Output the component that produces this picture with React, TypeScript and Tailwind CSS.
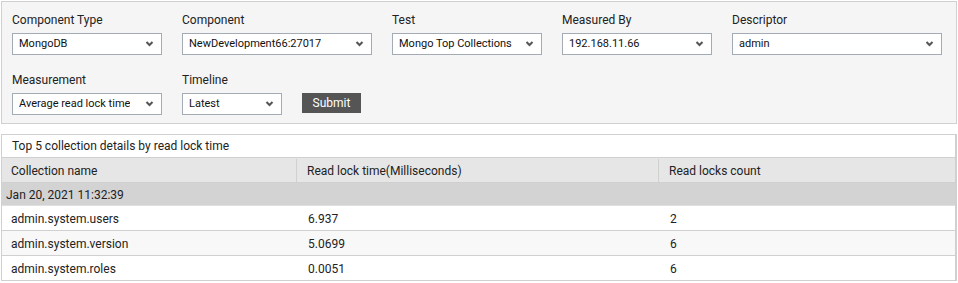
import React from "react";

function Chevron() {
  return (
    <svg width="9" height="6" viewBox="0 0 9 6" className="shrink-0">
      <path d="M1.5 1 L4.5 4 L7.5 1" fill="none" stroke="#555" strokeWidth="2" />
    </svg>
  );
}

function Field({ label, value, width }: { label: string; value: string; width: string }) {
  return (
    <div className="flex flex-col">
      <div className="text-[12px] leading-[20px] text-[#222] mb-[3px]">{label}</div>
      <div
        className={`${width} h-[22px] bg-white border border-[#a3abb5] flex items-center justify-between pl-[6px] pr-[7px] text-[11px] text-[#111]`}
      >
        <span className="truncate">{value}</span>
        <Chevron />
      </div>
    </div>
  );
}

const rows = [
  { name: "admin.system.users", time: "6.937", count: "2" },
  { name: "admin.system.version", time: "5.0699", count: "6" },
  { name: "admin.system.roles", time: "0.0051", count: "6" },
];

export default function App() {
  return (
    <div
      className="w-[958px] h-[283px] bg-white overflow-hidden pl-[1px] pt-[1px]"
      style={{ fontFamily: "Roboto, 'Liberation Sans', sans-serif" }}
    >
      <div className="w-[956px] h-[123px] bg-[#f5f5f5] border border-[#d0d0d0] pl-[10px] pt-[8px]">
        <div className="flex gap-[20px]">
          <Field label="Component Type" value="MongoDB" width="w-[150px]" />
          <Field label="Component" value="NewDevelopment66:27017" width="w-[190px]" />
          <Field label="Test" value="Mongo Top Collections" width="w-[150px]" />
          <Field label="Measured By" value="192.168.11.66" width="w-[150px]" />
          <Field label="Descriptor" value="admin" width="w-[210px]" />
        </div>
        <div className="flex gap-[20px] mt-[15px] items-end">
          <Field label="Measurement" value="Average read lock time" width="w-[150px]" />
          <Field label="Timeline" value="Latest" width="w-[100px]" />
          <button className="h-[20px] w-[59px] mb-[2px] bg-[#555555] text-white text-[12px] leading-[20px]">
            Submit
          </button>
        </div>
      </div>

      <div className="mt-[10px] w-[956px] border-t border-l border-r-2 border-[#d0d0d0] text-[12px] text-[#222]">
        <div className="h-[23px] bg-white flex items-center pl-[10px] border-b border-[#d0d0d0]">
          Top 5 collection details by read lock time
        </div>
        <div className="grid grid-cols-[295px_362px_1fr] h-[25px] pt-[1px] bg-[#e6e6e6] border-b border-[#d0d0d0]">
          <div className="flex items-center pl-[9px] border-r border-[#d0d0d0]">Collection name</div>
          <div className="flex items-center pl-[10px] border-r border-[#d0d0d0]">Read lock time(Milliseconds)</div>
          <div className="flex items-center pl-[10px]">Read locks count</div>
        </div>
        <div className="h-[23px] pt-[1px] bg-[#d3d3d3] flex items-center pl-[4px] border-b border-[#e0e0e0]">
          Jan 20, 2021 11:32:39
        </div>
        {rows.map((r, i) => (
          <div
            key={r.name}
            className={`grid grid-cols-[295px_362px_1fr] h-[25px] pt-[2px] border-b border-[#d0d0d0] ${
              i % 2 === 1 ? "bg-[#f8f8f8]" : "bg-white"
            }`}
          >
            <div className="flex items-center pl-[9px]">{r.name}</div>
            <div className="flex items-center pl-[11px]">{r.time}</div>
            <div className="flex items-center pl-[11px]">{r.count}</div>
          </div>
        ))}
      </div>
    </div>
  );
}
